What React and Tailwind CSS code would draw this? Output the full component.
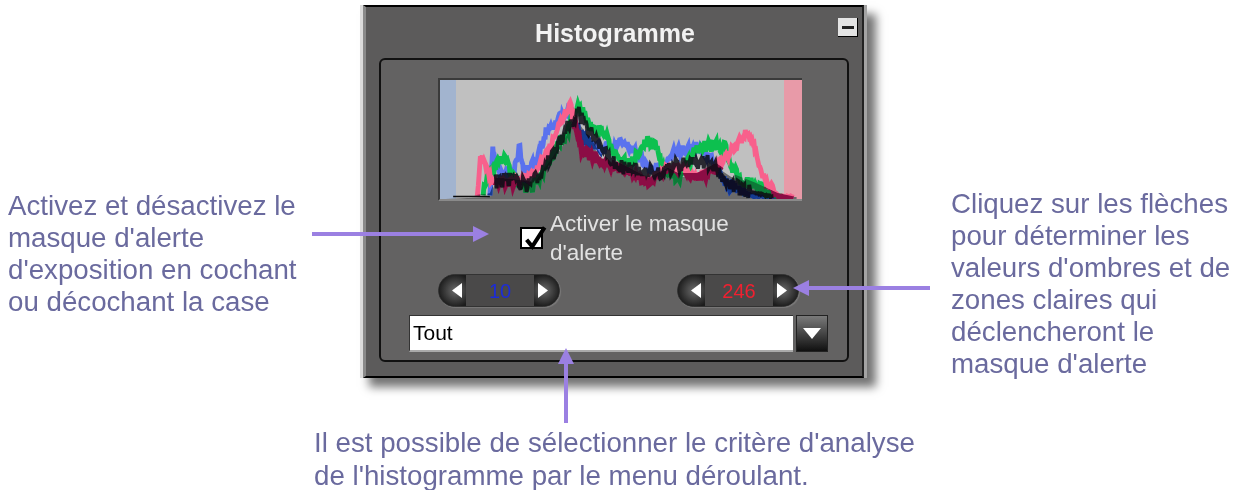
const SANS = "font-['Liberation_Sans',Arial,sans-serif]"

// control points of each channel, in histogram pixels (363 x 123)
const PINK = [[33,120],[36,77],[41,89],[49,105],[71,105],[91,99],[108,69],[124,32],[129,25],[141,72],[158,82],[171,89],[188,95],[208,105],[228,92],[241,90],[258,102],[278,92],[294,75],[311,55],[319,69],[328,99],[344,120],[361,121]]
const BLUE = [[46,120],[49,74],[56,99],[71,95],[77,69],[81,99],[88,89],[94,82],[106,49],[119,39],[130,35],[144,62],[164,72],[181,64],[194,72],[211,92],[228,90],[234,75],[261,69],[278,85],[291,109],[318,120],[345,121]]
const GREEN = [[39,120],[44,99],[61,77],[68,102],[88,112],[108,82],[124,55],[138,27],[151,49],[164,55],[174,72],[178,79],[191,87],[204,65],[214,65],[228,92],[241,99],[258,75],[271,67],[288,69],[298,95],[318,109],[341,120],[350,121]]
const BLACK = [[52,105],[70,102],[85,110],[100,95],[115,70],[128,45],[138,35],[150,55],[165,75],[180,90],[200,92],[222,95],[240,88],[260,85],[275,85],[290,105],[310,115],[340,121]]
const HILL = [[46,121],[52,105],[80,108],[92,110],[110,85],[125,62],[135,40],[145,55],[160,80],[190,95],[210,105],[230,95],[240,100],[260,100],[280,90],[295,100],[320,110],[344,121]]

const jag = (points, seed, amp) => {
  let s = seed
  const rnd = () => {
    s = (s * 16807) % 2147483647
    return s / 2147483647 - 0.5
  }
  const out = []
  for (let i = 0; i < points.length - 1; i++) {
    const [x0, y0] = points[i]
    const [x1, y1] = points[i + 1]
    for (let x = x0; x < x1; x += 1) {
      const y = y0 + ((y1 - y0) * (x - x0)) / (x1 - x0)
      const a = y > 116 ? amp * 0.15 : amp
      out.push(`${x},${(y + rnd() * a).toFixed(1)}`)
    }
  }
  return out.join(' ')
}

const hillShape = `0,123 ${HILL.map(p => p.join(',')).join(' ')} 363,121 363,123`

const Histogram = () => (
  <div className="w-[364px] h-[123px] border-t-2 border-l-2 border-[#3a3a3a] border-b-2 border-b-[#8a8a8a] bg-[#c0c0c0] relative flex justify-between">
    <div className="w-[16px] bg-[#a2b4cf]" />
    <div className="w-[18px] bg-[#e89aa8]" />
    <svg viewBox="0 0 363 123" className="absolute inset-0 w-full h-full">
      <defs>
        <clipPath id="hill">
          <polygon points={`0,123 ${HILL.map(([x, y]) => `${x},${y - 4}`).join(' ')} 363,121 363,123`} />
        </clipPath>
        <filter id="soft">
          <feGaussianBlur stdDeviation="0.5" />
        </filter>
      </defs>
      <g filter="url(#soft)" fill="none" strokeWidth="5">
        <polygon points={hillShape} fill="#6a6a6a" />
        <polyline points={jag(BLUE, 11, 11)} stroke="#5a72ee" />
        <polyline points={jag(GREEN, 23, 14)} stroke="#08c050" />
        <polyline points={jag(PINK, 37, 9)} stroke="#f8608c" />
        <g clipPath="url(#hill)">
          <polyline points={jag(BLUE, 11, 11)} stroke="#123a90" />
          <polyline points={jag(GREEN, 23, 14)} stroke="#0a7a38" />
          <polyline points={jag(PINK, 37, 9)} stroke="#8c0c44" strokeWidth="6" />
        </g>
        <polyline points={jag(BLACK, 53, 15)} stroke="#0a0a14" strokeWidth="4" opacity="0.85" />
        <line x1="8" y1="120.5" x2="46" y2="120.5" stroke="#111" strokeWidth="1.5" />
      </g>
    </svg>
  </div>
)

const Spinner = ({ value, color }) => (
  <div className="w-[122px] h-[33px] flex rounded-full bg-[#1c1c1c] border border-[#333] overflow-hidden shadow-[1px_1px_1px_rgba(255,255,255,0.15)]">
    <div className="w-[27px] flex items-center justify-end pr-[4px] bg-[radial-gradient(circle_at_60%_50%,#6a6a6a,#1c1c1c_75%)]">
      <svg width="10" height="15" viewBox="0 0 10 15"><polygon points="10,0 10,15 0,7.5" fill="#fff" /></svg>
    </div>
    <div className={`w-[68px] bg-[#4a4949] flex items-center justify-center text-[20px] ${SANS} ${color}`}>{value}</div>
    <div className="flex-1 flex items-center pl-[4px] bg-[radial-gradient(circle_at_40%_50%,#6a6a6a,#1c1c1c_75%)]">
      <svg width="10" height="15" viewBox="0 0 10 15"><polygon points="0,0 0,15 10,7.5" fill="#fff" /></svg>
    </div>
  </div>
)

const Panel = () => (
  <div className="w-[507px] h-[373px] -ml-px border-l-[3px] border-r-[3px] border-l-[#dcdcdc] border-r-[#a4a4a4] shadow-[9px_9px_9px_rgba(0,0,0,0.55)]">
    <div className="h-full flex flex-col bg-[#5c5b5b] border-l-[3px] border-l-[#8a8a8a] border-t-2 border-t-black border-b-2 border-b-black border-r-2 border-r-[#222]">
      <div className="h-[51px] shrink-0 relative flex items-center justify-center pl-[2px]">
        <span className={`text-[25px] font-bold text-[#f2f2f2] ${SANS}`}>Histogramme</span>
        <div className="absolute right-[4px] top-[11px] w-[20px] h-[19px] bg-[#e4e4e4] border-b border-r border-black flex items-center justify-center">
          <div className="w-[12px] h-[3px] bg-[#222]" />
        </div>
      </div>
      <div className="mx-[13px] mb-[14px] flex-1 bg-[#636262] border-2 border-[#111] rounded-md flex flex-col items-start">
        <div className="ml-[57px] mt-[18px]">
          <Histogram />
        </div>
        <div className="ml-[139px] mt-[10px] h-[54px] flex items-center gap-[7px]">
          <div className="relative w-[23px] h-[22px] bg-white border-2 border-black shrink-0">
            <svg viewBox="0 0 24 24" className="absolute -top-[5px] -left-[1px] w-[27px] h-[27px]">
              <path d="M5 14 L10 20 L21 3" fill="none" stroke="#000" strokeWidth="3.6" />
            </svg>
          </div>
          <div className={`text-[22.5px] leading-[29px] text-[#e2e2e2] ${SANS}`}>
            Activer le masque<br />d'alerte
          </div>
        </div>
        <div className="ml-[57px] mt-[9px] w-[361px] flex justify-between">
          <Spinner value="10" color="text-[#1c2cd8]" />
          <Spinner value="246" color="text-[#f02030]" />
        </div>
        <div className="ml-[28px] mt-[8px] w-[419px] h-[37px] flex justify-between">
          <div className={`w-[384px] bg-white border-t border-l border-[#333] border-b-2 border-b-[#aaa] flex items-center pl-[3px] text-[21px] text-black ${SANS}`}>Tout</div>
          <div className="w-[32px] bg-[linear-gradient(#7a7a7a,#101010)] border border-[#222] flex items-center justify-center">
            <svg width="18" height="11" viewBox="0 0 18 11"><polygon points="0,0 18,0 9,11" fill="#fff" /></svg>
          </div>
        </div>
      </div>
    </div>
  </div>
)

const Arrow = ({ className, width, height, children }) => (
  <svg className={`absolute ${className}`} width={width} height={height} viewBox={`0 0 ${width} ${height}`} fill="#9b80e2">
    {children}
  </svg>
)

export default function App() {
  return (
    <div className={`relative w-[1234px] h-[490px] overflow-hidden bg-white text-[#6a6a9e] text-[27.7px] leading-[32px] blur-[0.35px] ${SANS}`}>
      <div className="grid grid-cols-[361px_506px_1fr] pt-[5px]">
        <div className="pl-[8px] pt-[185px]">
          Activez et désactivez le<br />masque d'alerte<br />d'exposition en cochant<br />ou décochant la case
        </div>
        <Panel />
        <div className="pl-[84px] pt-[183px]">
          Cliquez sur les flèches<br />pour déterminer les<br />valeurs d'ombres et de<br />zones claires qui<br />déclencheront le<br />masque d'alerte
        </div>
      </div>
      <div className="pl-[314px] pt-[46px] leading-[33px]">
        Il est possible de sélectionner le critère d'analyse<br />de l'histogramme par le menu déroulant.
      </div>

      <Arrow className="left-[312px] top-[226px]" width={177} height={16}>
        <rect x="0" y="6" width="162" height="4" />
        <polygon points="161,0 177,8 161,16" />
      </Arrow>
      <Arrow className="left-[793px] top-[280px]" width={137} height={16}>
        <rect x="15" y="6" width="122" height="4" />
        <polygon points="0,8 16,0 16,16" />
      </Arrow>
      <Arrow className="left-[558px] top-[348px]" width={16} height={75}>
        <rect x="6" y="15" width="4" height="60" />
        <polygon points="8,0 0,16 16,16" />
      </Arrow>
    </div>
  )
}
